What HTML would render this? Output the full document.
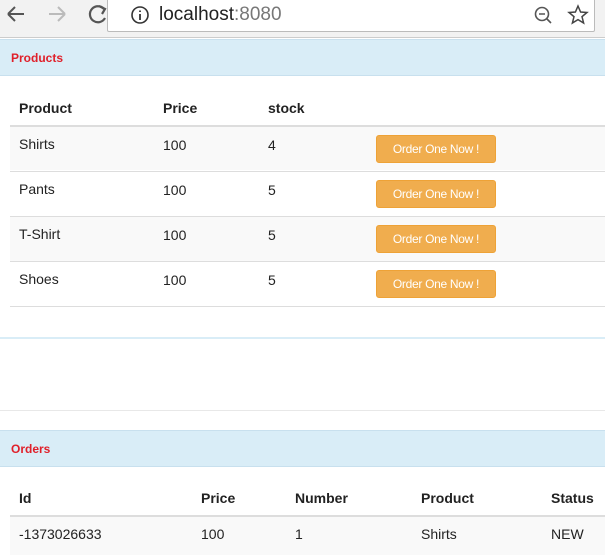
<!DOCTYPE html>
<html><head><style>
*{margin:0;padding:0;box-sizing:border-box}
body{width:605px;height:547px;overflow:hidden;background:#fff;font-family:"Liberation Sans",sans-serif;color:#222;position:relative}
.bar{position:absolute;left:0;top:0;width:605px;height:38px;background:#f2f2f2;border-bottom:1px solid #ccc}
.addr{position:absolute;left:107px;top:-2px;width:488px;height:34px;background:#fff;border:1px solid #bbb;border-radius:2px}
.abs{position:absolute}
.band{position:absolute;left:0;width:605px;height:37px;background:#d9edf7;border-top:1px solid #c8e0ee;border-bottom:1px solid #c8e0ee}
.band span{position:absolute;left:11px;top:11px;color:#e0202a;font-size:12px;font-weight:bold}
.th{position:absolute;font-size:14px;font-weight:bold}
.td{position:absolute;font-size:14px}
.row{position:absolute;left:10px;width:595px;height:45px;border-top:1px solid #ddd}
.btn{position:absolute;left:376px;width:120px;height:28px;background:#f0ad4e;border:1px solid #eea236;border-radius:3px;color:#fff;font-size:12px;text-align:center;line-height:26px;letter-spacing:-0.3px}
</style></head><body>
<div class="bar"></div>
<svg class="abs" style="left:0;top:0" width="110" height="32">
<g fill="none" stroke="#555" stroke-width="2"><path d="M8 14h16M8 14l7-7M8 14l7 7"/></g>
<g fill="none" stroke="#bbb" stroke-width="2"><path d="M49 14h16M65 14l-7-7M65 14l-7 7"/></g>
<g fill="none" stroke="#555" stroke-width="2.2"><path d="M104 9a8 8 0 1 0 1 9"/><path d="M99 6l6 3-3 5" /></g>
</svg>
<div class="addr"></div>
<svg class="abs" style="left:130px;top:5px" width="20" height="20"><circle cx="10" cy="10" r="8" fill="none" stroke="#333" stroke-width="1.6"/><path d="M10 9v6M10 5.5v1.5" stroke="#333" stroke-width="1.8"/></svg>
<div class="abs" style="left:159px;top:4px;font-size:19px;color:#222">localhost<span style="color:#777">:8080</span></div>
<svg class="abs" style="left:532px;top:4px" width="60" height="24"><circle cx="10" cy="10" r="6.5" fill="none" stroke="#555" stroke-width="1.6"/><path d="M7 10h6M15 15l4 4" stroke="#555" stroke-width="1.6"/><path d="M46 2l2.6 6 6.4.5-5 4.2 1.6 6.3-5.6-3.4-5.6 3.4 1.6-6.3-5-4.2 6.4-.5z" fill="none" stroke="#444" stroke-width="1.5"/></svg>

<div class="band" style="top:39px"><span>Products</span></div>
<div class="th" style="left:19px;top:100px">Product</div>
<div class="th" style="left:163px;top:100px">Price</div>
<div class="th" style="left:268px;top:100px">stock</div>
<div class="row" style="top:125px;background:#f9f9f9;border-top:2px solid #ddd"></div>
<div class="row" style="top:171px"></div>
<div class="row" style="top:216px;background:#f9f9f9"></div>
<div class="row" style="top:261px"></div>
<div class="row" style="top:306px;height:1px"></div>
<div class="td" style="left:19px;top:136px">Shirts</div><div class="td" style="left:163px;top:137px">100</div><div class="td" style="left:268px;top:137px">4</div><div class="btn" style="top:135px">Order One Now !</div>
<div class="td" style="left:19px;top:181px">Pants</div><div class="td" style="left:163px;top:182px">100</div><div class="td" style="left:268px;top:182px">5</div><div class="btn" style="top:180px">Order One Now !</div>
<div class="td" style="left:19px;top:226px">T-Shirt</div><div class="td" style="left:163px;top:227px">100</div><div class="td" style="left:268px;top:227px">5</div><div class="btn" style="top:225px">Order One Now !</div>
<div class="td" style="left:19px;top:271px">Shoes</div><div class="td" style="left:163px;top:272px">100</div><div class="td" style="left:268px;top:272px">5</div><div class="btn" style="top:270px">Order One Now !</div>
<div class="abs" style="left:0;top:337px;width:605px;height:2px;background:#d9edf7"></div>
<div class="abs" style="left:0;top:410px;width:605px;height:1px;background:#e8e8e8"></div>

<div class="band" style="top:430px"><span>Orders</span></div>
<div class="th" style="left:19px;top:490px">Id</div>
<div class="th" style="left:201px;top:490px">Price</div>
<div class="th" style="left:295px;top:490px">Number</div>
<div class="th" style="left:421px;top:490px">Product</div>
<div class="th" style="left:551px;top:490px">Status</div>
<div class="row" style="top:515px;height:40px;background:#f9f9f9;border-top:2px solid #ddd"></div>
<div class="td" style="left:19px;top:526px">-1373026633</div>
<div class="td" style="left:201px;top:526px">100</div>
<div class="td" style="left:295px;top:526px">1</div>
<div class="td" style="left:421px;top:526px">Shirts</div>
<div class="td" style="left:551px;top:526px">NEW</div>
</body></html>
